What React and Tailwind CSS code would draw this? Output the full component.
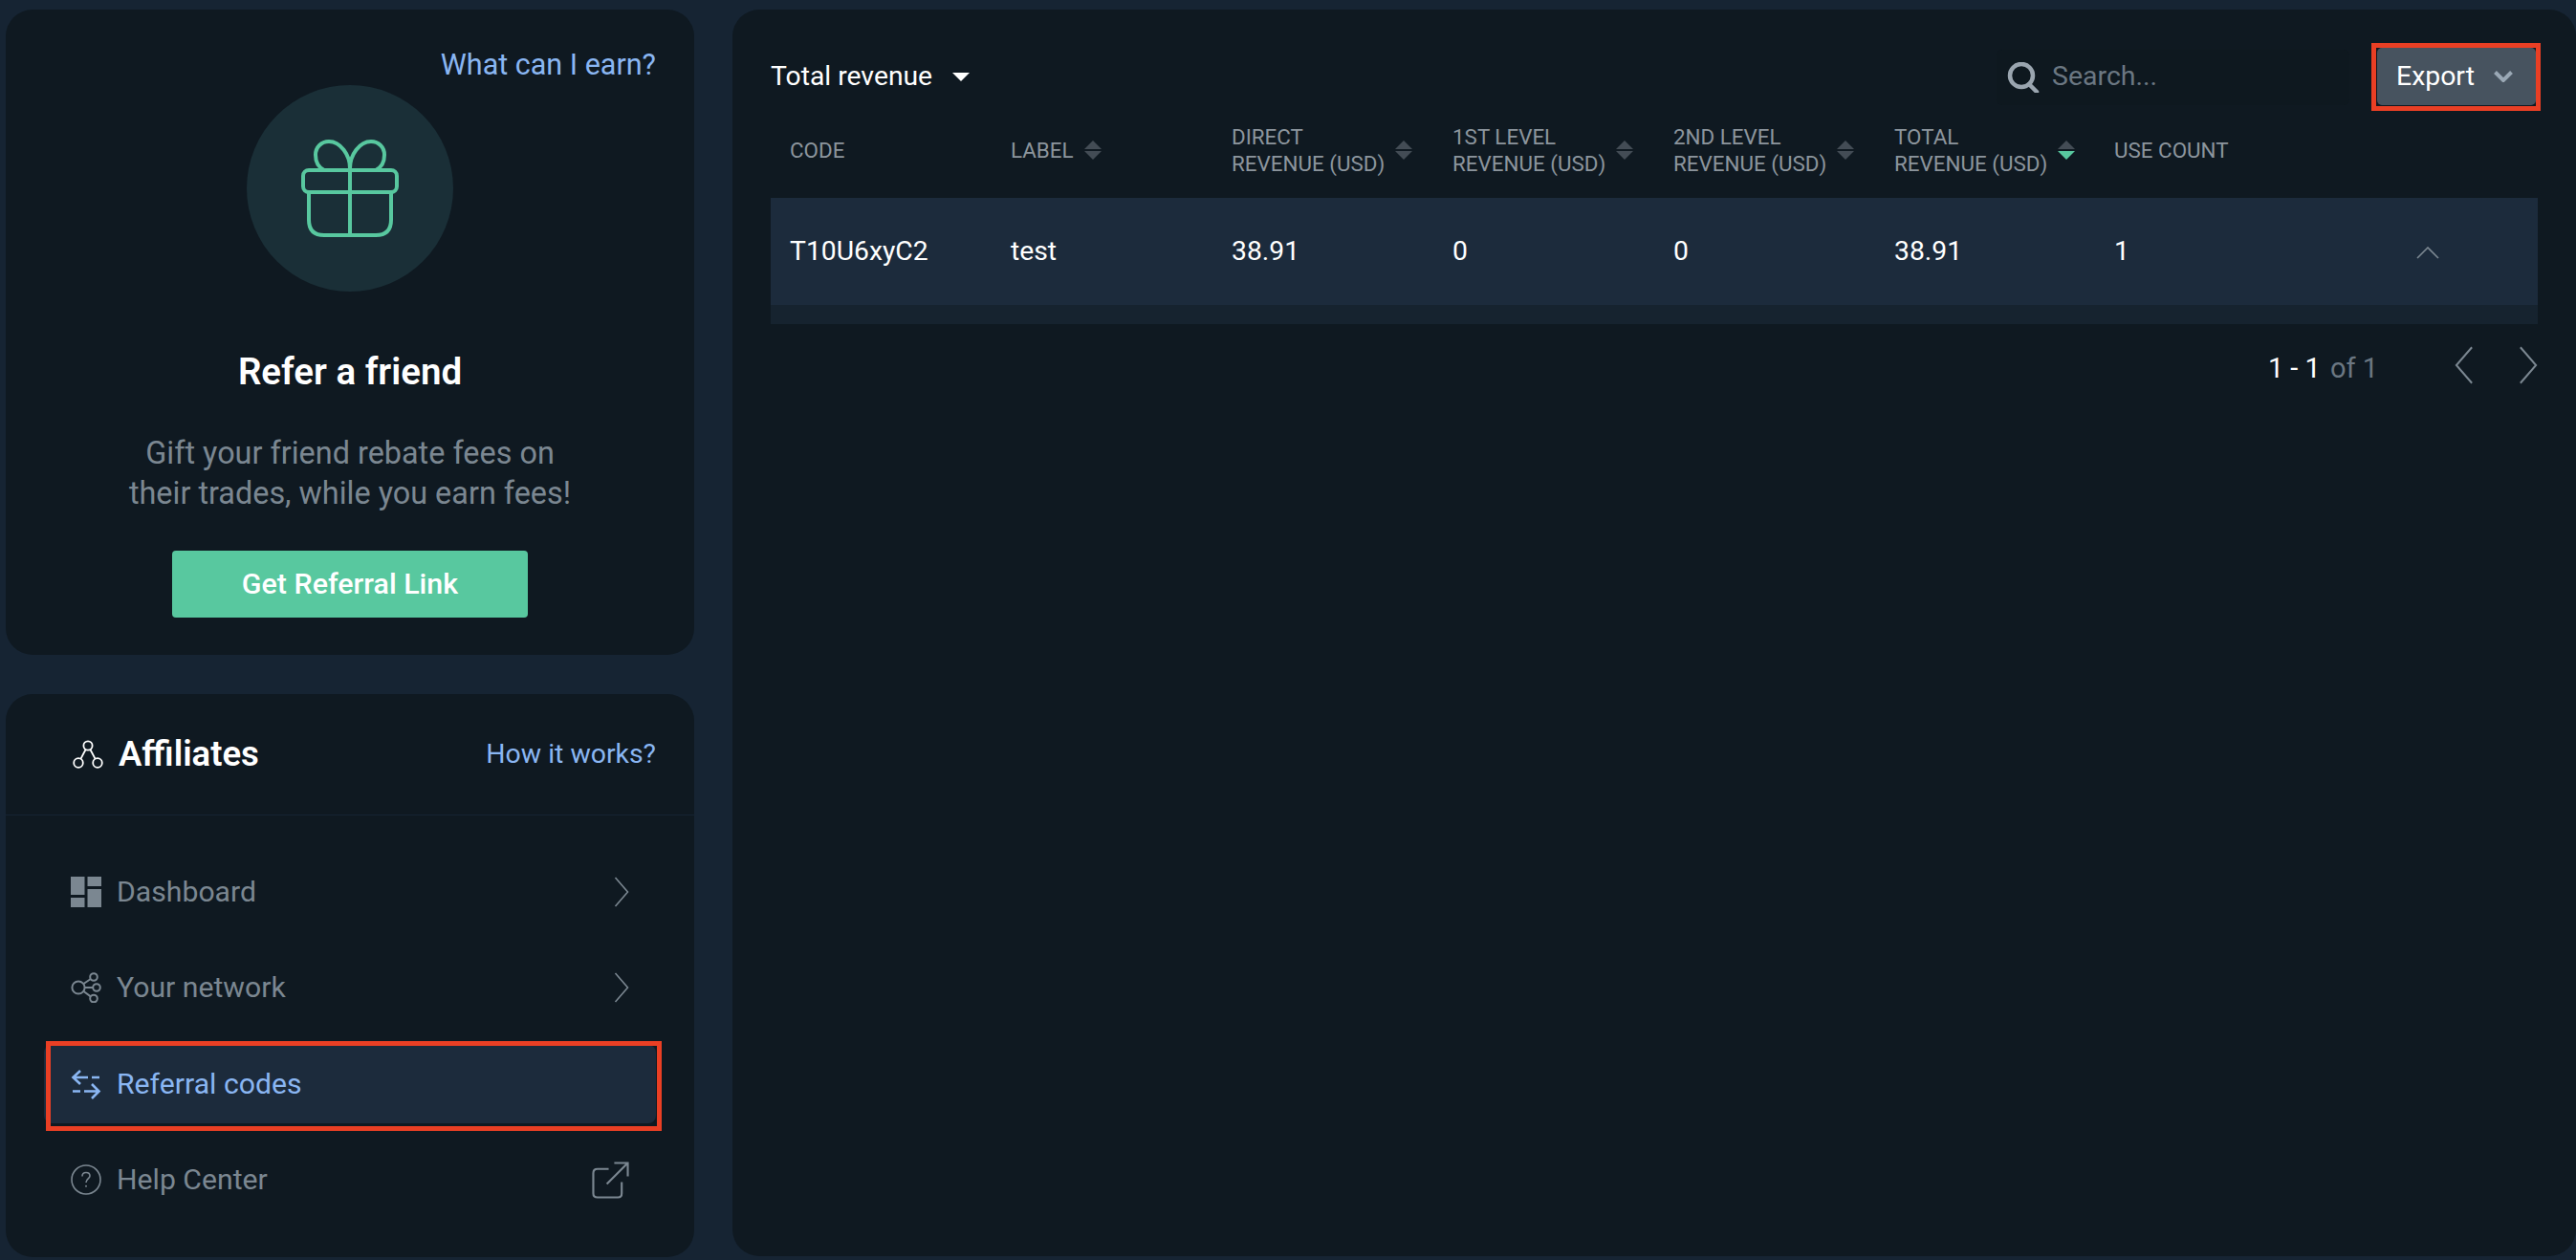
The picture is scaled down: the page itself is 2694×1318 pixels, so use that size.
import React from "react";

const Chevron = ({ dir = "right", className = "" }) => (
  <svg viewBox="0 0 16 32" className={className} fill="none" stroke="currentColor" strokeWidth="1.6">
    {dir === "right" ? <path d="M1.5 1 L14.5 16 L1.5 31" /> : <path d="M14.5 1 L1.5 16 L14.5 31" />}
  </svg>
);

const Sort = ({ active = false }) => (
  <svg viewBox="0 0 18 20" className="w-[18px] h-[20px] shrink-0">
    <path d="M9 0 L18 9 L0 9 Z" fill="#434c55" />
    <path d="M0 11 L18 11 L9 20 Z" fill={active ? "#58c89f" : "#434c55"} />
  </svg>
);

const Gift = () => (
  <svg viewBox="0 0 102 102" className="w-[102px] h-[102px]" fill="none" stroke="#58c89f" strokeWidth="4">
    <rect x="2" y="32" width="98" height="23" rx="6" />
    <path d="M8 55 V84 Q8 100 24 100 H78 Q94 100 94 84 V55" />
    <path d="M51 30 V100" />
    <path d="M51 30 C51 16 41 2 29 2 C21 2 15 8 15 16 C15 23 18 29 24 32" />
    <path d="M51 30 C51 16 61 2 73 2 C81 2 87 8 87 16 C87 23 84 29 78 32" />
  </svg>
);

const AffIcon = () => (
  <svg viewBox="0 0 32 30" className="w-[32px] h-[30px]" fill="none" stroke="#fff" strokeWidth="1.8">
    <circle cx="16" cy="6" r="4.6" />
    <circle cx="6" cy="24" r="4.8" />
    <circle cx="26" cy="24" r="4.8" />
    <path d="M13.6 10 L8.4 19.8 M18.4 10 L23.6 19.8" />
  </svg>
);

const DashIcon = () => (
  <svg viewBox="0 0 32 32" className="w-[32px] h-[32px]" fill="#7b8791">
    <rect x="0" y="0" width="14.5" height="19" />
    <rect x="17.5" y="0" width="14.5" height="10" />
    <rect x="0" y="22" width="14.5" height="10" />
    <rect x="17.5" y="13" width="14.5" height="19" />
  </svg>
);

const NetIcon = () => (
  <svg viewBox="0 0 32 32" className="w-[32px] h-[32px]" fill="none" stroke="#7b8791" strokeWidth="2">
    <circle cx="8" cy="16" r="6.6" />
    <circle cx="24" cy="5" r="3.8" />
    <circle cx="27" cy="16" r="3.8" />
    <circle cx="24" cy="27.5" r="3.8" />
    <path d="M13.5 12 L20.8 7 M14.6 16 H23.2 M13.5 20 L20.8 25.4" />
  </svg>
);

const RefIcon = () => (
  <svg viewBox="0 0 32 32" className="w-[32px] h-[32px]" fill="none" stroke="#8ab6f2" strokeWidth="2.6">
    <path d="M10 2 L2.5 9 L10 16 M2.5 9 H18 M22 9 H30" />
    <path d="M22 16 L29.5 23.5 L22 31 M29.5 23.5 H14 M10 23.5 H2" />
  </svg>
);

const HelpIcon = () => (
  <svg viewBox="0 0 32 32" className="w-[32px] h-[32px]" fill="none" stroke="#7b8791" strokeWidth="1.6">
    <circle cx="16" cy="16" r="15" />
    <path d="M12 12.5 C12 9.5 14 8.5 16 8.5 C18.4 8.5 20 10 20 12 C20 15 16 15 16 19" />
    <circle cx="16" cy="22.8" r="1" fill="#7b8791" stroke="none" />
  </svg>
);

const ExtIcon = () => (
  <svg viewBox="0 0 40 40" className="w-[39px] h-[39px]" fill="none" stroke="#7b8791" strokeWidth="2.2">
    <path d="M18 8 H6 Q1.5 8 1.5 12.5 V34 Q1.5 38.5 6 38.5 H28 Q32 38.5 32 34 V22" />
    <path d="M16 24 L38 2 M24 1.5 H38.5 V16" />
  </svg>
);

const NavRow = ({ icon, label, right, active }) => (
  <div className={`relative flex items-center h-[82px] pl-[28px] pr-[28px] rounded-[8px] ${active ? "bg-[#1c2b3c]" : ""}`}>
    <span className="w-[32px] shrink-0 flex">{icon}</span>
    <span className={`ml-[16px] text-[30.2px] leading-none ${active ? "text-[#8ab6f2]" : "text-[#7b8791]"}`}>{label}</span>
    <span className="ml-auto flex">{right}</span>
    {active && <span className="absolute -top-[4px] -bottom-[8px] left-[2px] -right-[6px] border-[5px] border-[#ea3f24]" />}
  </div>
);

const Head = ({ lines, sort, active }) => (
  <div className="flex items-center">
    <div className="text-[22.4px] leading-[28px] text-[#8c959d] whitespace-nowrap">
      {lines.map((l) => (
        <div key={l}>{l}</div>
      ))}
    </div>
    {sort && <span className="ml-[11px]"><Sort active={active} /></span>}
  </div>
);

const columns = "grid grid-cols-[231px_231px_231px_231px_231px_230px_auto] pl-[20px]";

export default function App() {
  return (
    <div className="flex w-[2694px] h-[1318px] overflow-hidden bg-[#162433] font-['Roboto',sans-serif] text-white">
      <div className="ml-[6px] mt-[10px] w-[720px] shrink-0 flex flex-col gap-[41px]">
        <section className="relative h-[675px] rounded-[28px] bg-[#0f1921] flex flex-col items-center">
          <a className="absolute right-[40px] top-[40px] text-[30.5px] leading-[36px] text-[#8ab6f2]">What can I earn?</a>
          <div className="mt-[79px] w-[216px] h-[216px] rounded-full bg-[#1a2f37] flex items-center justify-center">
            <Gift />
          </div>
          <h2 className="mt-[60px] text-[38.5px] leading-[48px] font-semibold">Refer a friend</h2>
          <p className="mt-[40px] text-[32.4px] leading-[42px] text-[#7b8791] text-center">
            Gift your friend rebate fees on
            <br />
            their trades, while you earn fees!
          </p>
          <button className="mt-[39px] w-[372px] h-[70px] rounded-[4px] bg-[#58c89f] text-[30.4px] font-medium text-white">
            Get Referral Link
          </button>
        </section>

        <section className="h-[589px] rounded-[28px] bg-[#0f1921] flex flex-col">
          <div className="h-[127px] flex items-center pl-[70px] pr-[40px] border-b border-[#162433]">
            <AffIcon />
            <span className="ml-[16px] text-[36.5px] font-semibold leading-none">Affiliates</span>
            <a className="ml-auto text-[28.4px] leading-none text-[#8ab6f2]">How it works?</a>
          </div>
          <nav className="mt-[39px] ml-[40px] w-[640px] flex flex-col gap-[18.4px]">
            <NavRow icon={<DashIcon />} label="Dashboard" right={<Chevron className="w-[16px] h-[32px] text-[#7b8791]" />} />
            <NavRow icon={<NetIcon />} label="Your network" right={<Chevron className="w-[16px] h-[32px] text-[#7b8791]" />} />
            <NavRow icon={<RefIcon />} label="Referral codes" active />
            <NavRow icon={<HelpIcon />} label="Help Center" right={<ExtIcon />} />
          </nav>
        </section>
      </div>

      <main className="ml-[40px] mt-[10px] flex-1 min-w-0 h-[1304px] rounded-[28px] bg-[#0f1921] pt-[35px] pl-[40px] pr-[40px]">
        <div className="flex items-center h-[71px]">
          <span className="text-[28.3px] leading-none -mt-[1px]">Total revenue</span>
          <svg viewBox="0 0 18 9" className="ml-[21px] w-[18px] h-[9px]" fill="#fff">
            <path d="M0 0 H18 L9 9 Z" />
          </svg>
          <div className="ml-auto w-[369px] h-[58px] rounded-[6px] bg-[#0e181f] flex items-center pl-[11px]">
            <svg viewBox="0 0 34 32" className="w-[34px] h-[32px]" fill="none" stroke="#9aa5af" strokeWidth="4.5">
              <circle cx="15" cy="14" r="12" />
              <path d="M23 23 L31 31" strokeLinecap="round" />
            </svg>
            <span className="ml-[13px] text-[28.5px] leading-none text-[#6b7782] -mt-[1px]">Search...</span>
          </div>
          <div className="ml-[23px] -mr-[3px] w-[177px] h-[71px] border-[5px] border-[#ea3f24] bg-[#0f1921]">
            <div className="ml-[1px] h-[60px] rounded-[5px] bg-[#47535f] flex items-center pl-[20px]">
              <span className="text-[28.4px] leading-none">Export</span>
              <svg viewBox="0 0 20 12" className="ml-[20px] w-[20px] h-[12px]" fill="none" stroke="#9aa8b5" strokeWidth="4">
                <path d="M1.5 1.5 L10 10 L18.5 1.5" />
              </svg>
            </div>
          </div>
        </div>

        <div className={`${columns} h-[91px] pb-[9px] items-center`}>
          <Head lines={["CODE"]} />
          <Head lines={["LABEL"]} sort />
          <Head lines={["DIRECT", "REVENUE (USD)"]} sort />
          <Head lines={["1ST LEVEL", "REVENUE (USD)"]} sort />
          <Head lines={["2ND LEVEL", "REVENUE (USD)"]} sort />
          <Head lines={["TOTAL", "REVENUE (USD)"]} sort active />
          <Head lines={["USE COUNT"]} />
        </div>

        <div className={`${columns} h-[112px] items-center bg-[#1c2b3c] text-[28.3px] leading-none relative`}>
          <span>T10U6xyC2</span>
          <span>test</span>
          <span>38.91</span>
          <span>0</span>
          <span>0</span>
          <span>38.91</span>
          <span className="flex items-center">
            1
            <svg viewBox="0 0 24 13" className="ml-[300px] mt-[3px] w-[24px] h-[13px]" fill="none" stroke="#7b8791" strokeWidth="1.6">
              <path d="M1 12 L12 1 L23 12" />
            </svg>
          </span>
        </div>
        <div className="h-[20px] bg-[#16232f]" />

        <div className="mt-[23px] flex items-center justify-end h-[40px]">
          <span className="text-[29px] leading-none mt-[6px]">1 - 1</span>
          <span className="ml-[10px] text-[29px] leading-none text-[#6b7782] mt-[6px]">of 1</span>
          <Chevron dir="left" className="ml-[80px] w-[20px] h-[40px] text-[#7b8791]" />
          <Chevron className="ml-[47px] w-[20px] h-[40px] text-[#7b8791]" />
        </div>
      </main>
    </div>
  );
}
